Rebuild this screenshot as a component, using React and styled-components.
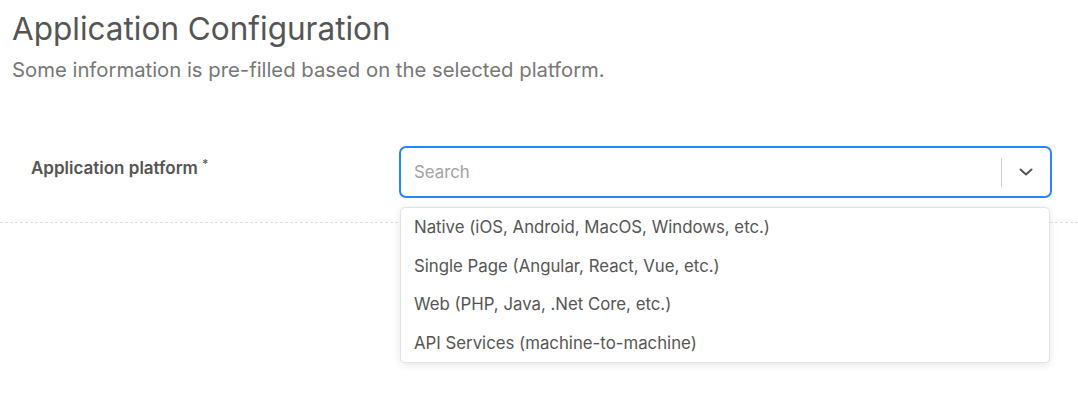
import React from "react";
import styled, { createGlobalStyle } from "styled-components";

const GlobalStyle = createGlobalStyle`
  body {
    margin: 0;
    background: #ffffff;
    font-family: Inter, "Noto Sans", sans-serif;
    color: #555555;
  }
`;

const platforms = [
  "Native (iOS, Android, MacOS, Windows, etc.)",
  "Single Page (Angular, React, Vue, etc.)",
  "Web (PHP, Java, .Net Core, etc.)",
  "API Services (machine-to-machine)",
];

const Page = styled.div`
  width: 1078px;
  height: 400px;
  overflow: hidden;
`;

const Header = styled.header`
  padding: 10px 12px 0;
`;

const Title = styled.h1`
  margin: 0;
  font-size: 31.5px;
  line-height: 38px;
  font-weight: 400;
  color: #555555;
`;

const Subtitle = styled.p`
  margin: 8px 0 0;
  font-size: 20.3px;
  line-height: 28px;
  color: #777777;
`;

const FieldRow = styled.div`
  display: flex;
  align-items: flex-start;
  margin-top: 62px;
  padding-bottom: 24px;
  border-bottom: 1px dashed #dcdcdc;
`;

const Label = styled.label`
  width: 368px;
  padding: 10px 0 0 31px;
  font-size: 17px;
  line-height: 24px;
  font-weight: 600;
  color: #555555;
`;

const Required = styled.sup`
  margin-left: 4px;
  font-size: 12px;
  line-height: 0;
  color: #666666;
  vertical-align: 6px;
`;

const SelectWrap = styled.div`
  position: relative;
  width: 653px;
`;

const Control = styled.div`
  display: flex;
  align-items: center;
  height: 52px;
  box-sizing: border-box;
  border: 2px solid #2684ff;
  border-radius: 7px;
  background: #ffffff;
`;

const SearchInput = styled.input`
  flex: 1;
  min-width: 0;
  border: none;
  outline: none;
  padding: 0 0 0 13px;
  font-family: inherit;
  font-size: 16.8px;
  color: #555555;
  background: transparent;

  &::placeholder {
    color: #a3a3a3;
  }
`;

const Separator = styled.span`
  width: 1px;
  height: 29px;
  background: #cccccc;
`;

const Indicator = styled.span`
  display: flex;
  align-items: center;
  justify-content: center;
  width: 48px;
  color: #555555;
`;

const Menu = styled.ul`
  position: absolute;
  top: 61px;
  left: 1px;
  right: 2px;
  margin: 0;
  padding: 0;
  list-style: none;
  background: #ffffff;
  border: 1px solid #e2e2e2;
  border-radius: 5px;
  box-shadow: 0 2px 8px rgba(0, 0, 0, 0.1);
`;

const Option = styled.li`
  padding: 0 13px;
  height: 38.5px;
  line-height: 38.5px;
  font-size: 16.8px;
  color: #555555;
  white-space: nowrap;
`;

function Chevron() {
  return (
    <svg width="16" height="16" viewBox="0 0 16 16" fill="none">
      <path
        d="M2.5 5.5L8 10.5L13.5 5.5"
        stroke="currentColor"
        strokeWidth="2"
        strokeLinecap="round"
        strokeLinejoin="round"
      />
    </svg>
  );
}

export default function App() {
  return (
    <Page>
      <GlobalStyle />
      <Header>
        <Title>Application Configuration</Title>
        <Subtitle>Some information is pre-filled based on the selected platform.</Subtitle>
      </Header>
      <FieldRow>
        <Label>
          Application platform<Required>*</Required>
        </Label>
        <SelectWrap>
          <Control>
            <SearchInput placeholder="Search" />
            <Separator />
            <Indicator>
              <Chevron />
            </Indicator>
          </Control>
          <Menu>
            {platforms.map((p) => (
              <Option key={p}>{p}</Option>
            ))}
          </Menu>
        </SelectWrap>
      </FieldRow>
    </Page>
  );
}
